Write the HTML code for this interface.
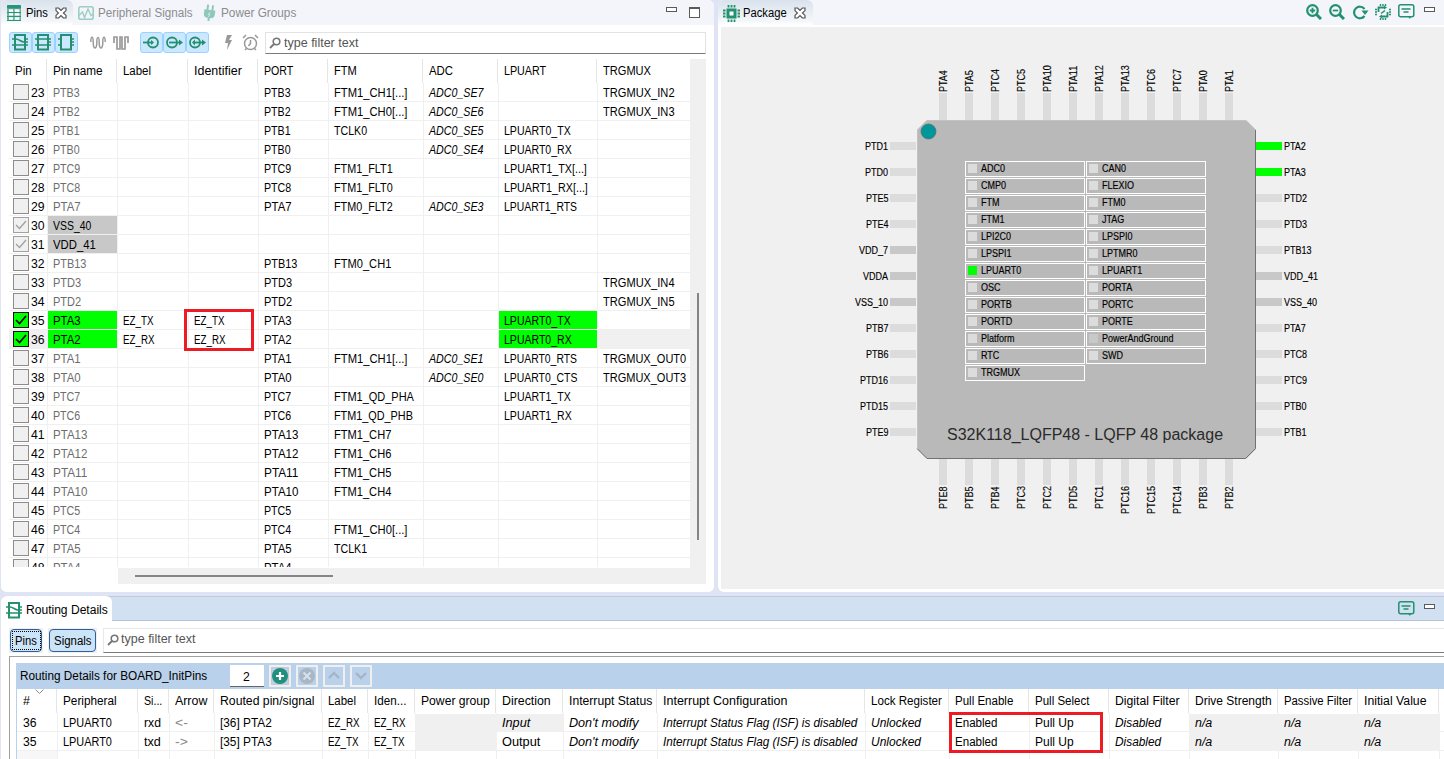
<!DOCTYPE html>
<html><head><meta charset="utf-8"><title>Pins</title>
<style>
html,body{margin:0;padding:0;}
body{width:1444px;height:759px;overflow:hidden;position:relative;background:#dfe4f4;font-family:"Liberation Sans",sans-serif;}
div,svg{position:absolute;box-sizing:border-box;}
.t{white-space:pre;transform-origin:0 0;}
</style></head><body>
<div style="left:1px;top:0px;width:713px;height:592px;background:#fff;border-radius:6px 6px 6px 6px;"></div>
<div style="left:1px;top:0px;width:713px;height:25px;background:#f3f5fb;border-radius:6px 6px 0 0;"></div>
<div style="left:1px;top:0px;width:72px;height:25px;background:linear-gradient(#d9e2ec,#f4f7fa 85%,#fff);border-radius:6px 6px 0 0;"></div>
<svg style="left:7px;top:5px;" width="14" height="16" viewBox="0 0 14 16"><rect x="0" y="0" width="14" height="16" rx="1.5" fill="#6db59f"/><rect x="0" y="0" width="14" height="3.6" rx="1" fill="#26937a"/><g fill="#fff"><rect x="2" y="4.3" width="4" height="2.6"/><rect x="7.8" y="4.3" width="4.6" height="2.6"/><rect x="2" y="8.2" width="4" height="2.4"/><rect x="7.8" y="8.2" width="4.6" height="2.4"/><rect x="2" y="12.2" width="4" height="2.6"/><rect x="7.8" y="12.2" width="4.6" height="2.6"/></g><path d="M0 7.5H14M0 11.5H14M0 15.5H14" stroke="#26937a" stroke-width="1"/></svg>
<div class="t" style="left:26px;top:7px;font-size:12px;line-height:13px;color:#000;transform:scaleX(0.9345);">Pins</div>
<svg style="left:55px;top:7px;" width="12" height="12" viewBox="0 0 12 12"><path d="M1 1 H3.6 L6 3.4 L8.4 1 H11 V3.6 L8.4 6 L11 8.4 V11 H8.4 L6 8.6 L3.6 11 H1 V8.4 L3.4 6 L1 3.6 Z" fill="#fff" stroke="#555" stroke-width="1.2"/></svg>
<svg style="left:78px;top:6px;" width="16" height="14" viewBox="0 0 16 14"><rect x="0.8" y="0.8" width="14.4" height="12.4" rx="2" fill="none" stroke="#9ccfc2" stroke-width="1.6"/><path d="M1 9.5 L4.5 6 L6.5 11.5 L10 3 L13 9.5 L15 8.5" fill="none" stroke="#9ccfc2" stroke-width="1.4"/></svg>
<div class="t" style="left:98px;top:7px;font-size:12px;line-height:13px;color:#8c8c8c;transform:scaleX(0.9715);">Peripheral Signals</div>
<svg style="left:203px;top:4px;" width="13" height="18" viewBox="0 0 13 18"><g transform="rotate(8 6.5 9)"><path d="M3 1 L5 1 L5 6 L8 6 L8 1 L10 1 L10 6 L12 6 L12 10 C12 13 10 14 7.5 14 L7.5 17 L5.5 17 L5.5 14 C3 14 1 13 1 10 L1 6 L3 6 Z" fill="#8fc8bb"/><path d="M7 8 L5.5 10.5 L7 10.5 L6 13" stroke="#d8ece6" stroke-width="0.9" fill="none"/></g></svg>
<div class="t" style="left:221px;top:7px;font-size:12px;line-height:13px;color:#8c8c8c;transform:scaleX(0.9816);">Power Groups</div>
<div style="left:666px;top:7px;width:11px;height:5px;border:1.3px solid #5a5a5a;background:#fff;"></div>
<div style="left:689px;top:7px;width:11px;height:11px;border:1.3px solid #5a5a5a;border-top-width:2.5px;background:#fff;"></div>
<div style="left:9px;top:32px;width:23px;height:21px;background:#cce8ff;border:1px solid #99d1ff;border-radius:3px;"></div>
<div style="left:32px;top:32px;width:23px;height:21px;background:#cce8ff;border:1px solid #99d1ff;border-radius:3px;"></div>
<div style="left:55px;top:32px;width:23px;height:21px;background:#cce8ff;border:1px solid #99d1ff;border-radius:3px;"></div>
<svg style="left:12px;top:34px;" width="17" height="17" viewBox="0 0 17 17"><rect x="3" y="1" width="10" height="14.5" fill="none" stroke="#23906f" stroke-width="2"/><path d="M0 5H3M13 5H16M0 11H3M13 11H16M13 8H16" stroke="#23906f" stroke-width="1.6"/><path d="M4 5 C7 5 9 8 12 8 M3 11H13" fill="none" stroke="#23906f" stroke-width="1.5"/></svg>
<svg style="left:35px;top:34px;" width="17" height="17" viewBox="0 0 17 17"><rect x="3" y="1" width="10" height="14.5" fill="none" stroke="#23906f" stroke-width="2"/><path d="M0 5H3M13 5H16M0 11H3M13 11H16M13 8H16" stroke="#23906f" stroke-width="1.6"/><path d="M3 5H13M3 11H13" stroke="#23906f" stroke-width="1.5"/></svg>
<svg style="left:58px;top:34px;" width="17" height="17" viewBox="0 0 17 17"><rect x="3" y="1" width="10" height="14.5" fill="none" stroke="#23906f" stroke-width="2"/><path d="M0 5H3M13 5H16M0 11H3M13 11H16M13 8H16" stroke="#23906f" stroke-width="1.6"/></svg>
<svg style="left:90px;top:36px;" width="16" height="14" viewBox="0 0 16 14"><path d="M0.8 6 C0.8 -0.5 3.2 -0.5 3.2 6 C3.2 13.8 6.8 13.8 6.8 7 C6.8 -0.2 9.2 -0.2 9.2 7 C9.2 13.8 12.8 13.8 12.8 6 C12.8 -0.5 15.2 -0.5 15.2 6" fill="none" stroke="#999" stroke-width="1.5"/></svg>
<svg style="left:113px;top:36px;" width="16" height="14" viewBox="0 0 16 14"><path d="M1 7V1H4V13H7V1H9V13H12V1H15V7" fill="none" stroke="#999" stroke-width="1.7"/></svg>
<div style="left:140px;top:32px;width:23px;height:21px;background:#cce8ff;border:1px solid #99d1ff;border-radius:3px;"></div>
<div style="left:163px;top:32px;width:23px;height:21px;background:#cce8ff;border:1px solid #99d1ff;border-radius:3px;"></div>
<div style="left:186px;top:32px;width:23px;height:21px;background:#cce8ff;border:1px solid #99d1ff;border-radius:3px;"></div>
<svg style="left:143px;top:35px;" width="17" height="15" viewBox="0 0 17 15"><circle cx="10" cy="7.5" r="5" fill="none" stroke="#23906f" stroke-width="1.8"/><path d="M0 7.5H10" stroke="#23906f" stroke-width="1.8"/><path d="M8 5 L11 7.5 L8 10Z" fill="#23906f"/></svg>
<svg style="left:166px;top:35px;" width="17" height="15" viewBox="0 0 17 15"><circle cx="6" cy="7.5" r="5" fill="none" stroke="#23906f" stroke-width="1.8"/><path d="M3 7.5H14" stroke="#23906f" stroke-width="1.8"/><path d="M13 4.5 L17 7.5 L13 10.5Z" fill="#23906f"/></svg>
<svg style="left:189px;top:35px;" width="17" height="15" viewBox="0 0 17 15"><circle cx="6" cy="7.5" r="5" fill="none" stroke="#23906f" stroke-width="1.8"/><path d="M4 7.5H14" stroke="#23906f" stroke-width="1.8"/><path d="M13 4.5 L17 7.5 L13 10.5Z M6 4.5 L3 7.5 L6 10.5Z" fill="#23906f"/></svg>
<svg style="left:224px;top:35px;" width="9" height="15" viewBox="0 0 9 15"><path d="M3 0 L8 0 L5 5 L8 5 L3 15 L4 8 L1 8 Z" fill="#999"/></svg>
<svg style="left:242px;top:34px;" width="17" height="17" viewBox="0 0 17 17"><circle cx="8.5" cy="9.5" r="6" fill="none" stroke="#999" stroke-width="1.5"/><path d="M8.5 6V9.5L6.5 12M1 4 L4 1 M16 4 L13 1 M3 16 L5 14 M14 16 L12 14" fill="none" stroke="#999" stroke-width="1.5"/></svg>
<div style="left:265px;top:32px;width:441px;height:22px;background:#fff;border:1px solid #e3e3e3;border-bottom:1px solid #7a7a7a;"></div>
<svg style="left:269px;top:37px;" width="12" height="12" viewBox="0 0 12 12"><circle cx="7.5" cy="4.5" r="3.3" fill="none" stroke="#777" stroke-width="1.6"/><path d="M5.5 6.5 L1 11" stroke="#777" stroke-width="1.8"/></svg>
<div class="t" style="left:284px;top:37px;font-size:12px;line-height:13px;color:#555;transform:scaleX(1.0429);">type filter text</div>
<div class="t" style="left:15px;top:65px;font-size:12px;line-height:13px;color:#000;transform:scaleX(0.9578);">Pin</div>
<div class="t" style="left:53px;top:65px;font-size:12px;line-height:13px;color:#000;transform:scaleX(0.9796);">Pin name</div>
<div style="left:46px;top:59px;width:1px;height:24px;background:#e5e5e5;"></div>
<div class="t" style="left:123px;top:65px;font-size:12px;line-height:13px;color:#000;transform:scaleX(0.9541);">Label</div>
<div style="left:116px;top:59px;width:1px;height:24px;background:#e5e5e5;"></div>
<div class="t" style="left:194px;top:65px;font-size:12px;line-height:13px;color:#000;transform:scaleX(1.0395);">Identifier</div>
<div style="left:187px;top:59px;width:1px;height:24px;background:#e5e5e5;"></div>
<div class="t" style="left:264px;top:65px;font-size:12px;line-height:13px;color:#000;transform:scaleX(0.8836);">PORT</div>
<div style="left:257px;top:59px;width:1px;height:24px;background:#e5e5e5;"></div>
<div class="t" style="left:334px;top:65px;font-size:12px;line-height:13px;color:#000;transform:scaleX(0.9263);">FTM</div>
<div style="left:327px;top:59px;width:1px;height:24px;background:#e5e5e5;"></div>
<div class="t" style="left:429px;top:65px;font-size:12px;line-height:13px;color:#000;transform:scaleX(0.9491);">ADC</div>
<div style="left:422px;top:59px;width:1px;height:24px;background:#e5e5e5;"></div>
<div class="t" style="left:504px;top:65px;font-size:12px;line-height:13px;color:#000;transform:scaleX(0.8927);">LPUART</div>
<div style="left:497px;top:59px;width:1px;height:24px;background:#e5e5e5;"></div>
<div class="t" style="left:603px;top:65px;font-size:12px;line-height:13px;color:#000;transform:scaleX(0.9229);">TRGMUX</div>
<div style="left:596px;top:59px;width:1px;height:24px;background:#e5e5e5;"></div>
<div style="left:9px;top:101px;width:681px;height:1px;background:#f0f0f0;"></div>
<div style="left:13px;top:84px;width:16px;height:16px;background:#f0f0f0;border:1px solid #8c8c8c;"></div>
<div class="t" style="left:31px;top:87px;font-size:12px;line-height:13px;color:#000;transform:scaleX(1.0166);">23</div>
<div class="t" style="left:53px;top:87px;font-size:12px;line-height:13px;color:#6d6d6d;transform:scaleX(0.8852);">PTB3</div>
<div class="t" style="left:264px;top:87px;font-size:12px;line-height:13px;color:#000;transform:scaleX(0.8852);">PTB3</div>
<div class="t" style="left:334px;top:87px;font-size:12px;line-height:13px;color:#000;transform:scaleX(0.9339);">FTM1_CH1[...]</div>
<div class="t" style="left:429px;top:87px;font-size:12px;line-height:13px;color:#000;font-style:italic;transform:scaleX(0.8883);">ADC0_SE7</div>
<div class="t" style="left:603px;top:87px;font-size:12px;line-height:13px;color:#000;transform:scaleX(0.9251);">TRGMUX_IN2</div>
<div style="left:9px;top:120px;width:681px;height:1px;background:#f0f0f0;"></div>
<div style="left:13px;top:103px;width:16px;height:16px;background:#f0f0f0;border:1px solid #8c8c8c;"></div>
<div class="t" style="left:31px;top:106px;font-size:12px;line-height:13px;color:#000;transform:scaleX(1.0166);">24</div>
<div class="t" style="left:53px;top:106px;font-size:12px;line-height:13px;color:#6d6d6d;transform:scaleX(0.8852);">PTB2</div>
<div class="t" style="left:264px;top:106px;font-size:12px;line-height:13px;color:#000;transform:scaleX(0.8852);">PTB2</div>
<div class="t" style="left:334px;top:106px;font-size:12px;line-height:13px;color:#000;transform:scaleX(0.9339);">FTM1_CH0[...]</div>
<div class="t" style="left:429px;top:106px;font-size:12px;line-height:13px;color:#000;font-style:italic;transform:scaleX(0.8883);">ADC0_SE6</div>
<div class="t" style="left:603px;top:106px;font-size:12px;line-height:13px;color:#000;transform:scaleX(0.9251);">TRGMUX_IN3</div>
<div style="left:9px;top:139px;width:681px;height:1px;background:#f0f0f0;"></div>
<div style="left:13px;top:122px;width:16px;height:16px;background:#f0f0f0;border:1px solid #8c8c8c;"></div>
<div class="t" style="left:31px;top:125px;font-size:12px;line-height:13px;color:#000;transform:scaleX(1.0166);">25</div>
<div class="t" style="left:53px;top:125px;font-size:12px;line-height:13px;color:#6d6d6d;transform:scaleX(0.8852);">PTB1</div>
<div class="t" style="left:264px;top:125px;font-size:12px;line-height:13px;color:#000;transform:scaleX(0.8852);">PTB1</div>
<div class="t" style="left:334px;top:125px;font-size:12px;line-height:13px;color:#000;transform:scaleX(0.8858);">TCLK0</div>
<div class="t" style="left:429px;top:125px;font-size:12px;line-height:13px;color:#000;font-style:italic;transform:scaleX(0.8883);">ADC0_SE5</div>
<div class="t" style="left:504px;top:125px;font-size:12px;line-height:13px;color:#000;transform:scaleX(0.8797);">LPUART0_TX</div>
<div style="left:9px;top:158px;width:681px;height:1px;background:#f0f0f0;"></div>
<div style="left:13px;top:141px;width:16px;height:16px;background:#f0f0f0;border:1px solid #8c8c8c;"></div>
<div class="t" style="left:31px;top:144px;font-size:12px;line-height:13px;color:#000;transform:scaleX(1.0166);">26</div>
<div class="t" style="left:53px;top:144px;font-size:12px;line-height:13px;color:#6d6d6d;transform:scaleX(0.8852);">PTB0</div>
<div class="t" style="left:264px;top:144px;font-size:12px;line-height:13px;color:#000;transform:scaleX(0.8852);">PTB0</div>
<div class="t" style="left:429px;top:144px;font-size:12px;line-height:13px;color:#000;font-style:italic;transform:scaleX(0.8883);">ADC0_SE4</div>
<div class="t" style="left:504px;top:144px;font-size:12px;line-height:13px;color:#000;transform:scaleX(0.8772);">LPUART0_RX</div>
<div style="left:9px;top:177px;width:681px;height:1px;background:#f0f0f0;"></div>
<div style="left:13px;top:160px;width:16px;height:16px;background:#f0f0f0;border:1px solid #8c8c8c;"></div>
<div class="t" style="left:31px;top:163px;font-size:12px;line-height:13px;color:#000;transform:scaleX(1.0166);">27</div>
<div class="t" style="left:53px;top:163px;font-size:12px;line-height:13px;color:#6d6d6d;transform:scaleX(0.8878);">PTC9</div>
<div class="t" style="left:264px;top:163px;font-size:12px;line-height:13px;color:#000;transform:scaleX(0.8878);">PTC9</div>
<div class="t" style="left:334px;top:163px;font-size:12px;line-height:13px;color:#000;transform:scaleX(0.9005);">FTM1_FLT1</div>
<div class="t" style="left:504px;top:163px;font-size:12px;line-height:13px;color:#000;transform:scaleX(0.8960);">LPUART1_TX[...]</div>
<div style="left:9px;top:196px;width:681px;height:1px;background:#f0f0f0;"></div>
<div style="left:13px;top:179px;width:16px;height:16px;background:#f0f0f0;border:1px solid #8c8c8c;"></div>
<div class="t" style="left:31px;top:182px;font-size:12px;line-height:13px;color:#000;transform:scaleX(1.0166);">28</div>
<div class="t" style="left:53px;top:182px;font-size:12px;line-height:13px;color:#6d6d6d;transform:scaleX(0.8878);">PTC8</div>
<div class="t" style="left:264px;top:182px;font-size:12px;line-height:13px;color:#000;transform:scaleX(0.8878);">PTC8</div>
<div class="t" style="left:334px;top:182px;font-size:12px;line-height:13px;color:#000;transform:scaleX(0.9005);">FTM1_FLT0</div>
<div class="t" style="left:504px;top:182px;font-size:12px;line-height:13px;color:#000;transform:scaleX(0.8937);">LPUART1_RX[...]</div>
<div style="left:9px;top:215px;width:681px;height:1px;background:#f0f0f0;"></div>
<div style="left:13px;top:198px;width:16px;height:16px;background:#f0f0f0;border:1px solid #8c8c8c;"></div>
<div class="t" style="left:31px;top:201px;font-size:12px;line-height:13px;color:#000;transform:scaleX(1.0166);">29</div>
<div class="t" style="left:53px;top:201px;font-size:12px;line-height:13px;color:#6d6d6d;transform:scaleX(0.9480);">PTA7</div>
<div class="t" style="left:264px;top:201px;font-size:12px;line-height:13px;color:#000;transform:scaleX(0.9480);">PTA7</div>
<div class="t" style="left:334px;top:201px;font-size:12px;line-height:13px;color:#000;transform:scaleX(0.9005);">FTM0_FLT2</div>
<div class="t" style="left:429px;top:201px;font-size:12px;line-height:13px;color:#000;font-style:italic;transform:scaleX(0.8883);">ADC0_SE3</div>
<div class="t" style="left:504px;top:201px;font-size:12px;line-height:13px;color:#000;transform:scaleX(0.8666);">LPUART1_RTS</div>
<div style="left:48px;top:216px;width:69px;height:18px;background:#c8c8c8;"></div>
<div style="left:9px;top:234px;width:681px;height:1px;background:#f0f0f0;"></div>
<div style="left:13px;top:217px;width:16px;height:16px;background:#f0f0f0;border:1px solid #a0a0a0;"></div>
<svg style="left:13px;top:217px;" width="16" height="16" viewBox="0 0 16 16"><path d="M3 8 L6.5 11.5 L13 4" fill="none" stroke="#a0a0a0" stroke-width="1.3"/></svg>
<div class="t" style="left:31px;top:220px;font-size:12px;line-height:13px;color:#000;transform:scaleX(1.0166);">30</div>
<div class="t" style="left:53px;top:220px;font-size:12px;line-height:13px;color:#000;transform:scaleX(0.8705);">VSS_40</div>
<div style="left:48px;top:235px;width:69px;height:18px;background:#c8c8c8;"></div>
<div style="left:9px;top:253px;width:681px;height:1px;background:#f0f0f0;"></div>
<div style="left:13px;top:236px;width:16px;height:16px;background:#f0f0f0;border:1px solid #a0a0a0;"></div>
<svg style="left:13px;top:236px;" width="16" height="16" viewBox="0 0 16 16"><path d="M3 8 L6.5 11.5 L13 4" fill="none" stroke="#a0a0a0" stroke-width="1.3"/></svg>
<div class="t" style="left:31px;top:239px;font-size:12px;line-height:13px;color:#000;transform:scaleX(1.0166);">31</div>
<div class="t" style="left:53px;top:239px;font-size:12px;line-height:13px;color:#000;transform:scaleX(0.9443);">VDD_41</div>
<div style="left:9px;top:272px;width:681px;height:1px;background:#f0f0f0;"></div>
<div style="left:13px;top:255px;width:16px;height:16px;background:#f0f0f0;border:1px solid #8c8c8c;"></div>
<div class="t" style="left:31px;top:258px;font-size:12px;line-height:13px;color:#000;transform:scaleX(1.0166);">32</div>
<div class="t" style="left:53px;top:258px;font-size:12px;line-height:13px;color:#6d6d6d;transform:scaleX(0.9091);">PTB13</div>
<div class="t" style="left:264px;top:258px;font-size:12px;line-height:13px;color:#000;transform:scaleX(0.9091);">PTB13</div>
<div class="t" style="left:334px;top:258px;font-size:12px;line-height:13px;color:#000;transform:scaleX(0.9241);">FTM0_CH1</div>
<div style="left:9px;top:291px;width:681px;height:1px;background:#f0f0f0;"></div>
<div style="left:13px;top:274px;width:16px;height:16px;background:#f0f0f0;border:1px solid #8c8c8c;"></div>
<div class="t" style="left:31px;top:277px;font-size:12px;line-height:13px;color:#000;transform:scaleX(1.0166);">33</div>
<div class="t" style="left:53px;top:277px;font-size:12px;line-height:13px;color:#6d6d6d;transform:scaleX(0.9192);">PTD3</div>
<div class="t" style="left:264px;top:277px;font-size:12px;line-height:13px;color:#000;transform:scaleX(0.9192);">PTD3</div>
<div class="t" style="left:603px;top:277px;font-size:12px;line-height:13px;color:#000;transform:scaleX(0.9251);">TRGMUX_IN4</div>
<div style="left:9px;top:310px;width:681px;height:1px;background:#f0f0f0;"></div>
<div style="left:13px;top:293px;width:16px;height:16px;background:#f0f0f0;border:1px solid #8c8c8c;"></div>
<div class="t" style="left:31px;top:296px;font-size:12px;line-height:13px;color:#000;transform:scaleX(1.0166);">34</div>
<div class="t" style="left:53px;top:296px;font-size:12px;line-height:13px;color:#6d6d6d;transform:scaleX(0.9192);">PTD2</div>
<div class="t" style="left:264px;top:296px;font-size:12px;line-height:13px;color:#000;transform:scaleX(0.9192);">PTD2</div>
<div class="t" style="left:603px;top:296px;font-size:12px;line-height:13px;color:#000;transform:scaleX(0.9251);">TRGMUX_IN5</div>
<div style="left:48px;top:311px;width:69px;height:18px;background:#00ff00;"></div>
<div style="left:499px;top:311px;width:98px;height:18px;background:#00ff00;"></div>
<div style="left:9px;top:329px;width:681px;height:1px;background:#f0f0f0;"></div>
<div style="left:13px;top:312px;width:16px;height:16px;background:#00ff00;border:1px solid #111;"></div>
<svg style="left:13px;top:312px;" width="16" height="16" viewBox="0 0 16 16"><path d="M3 8 L6.5 11.5 L13 4" fill="none" stroke="#000" stroke-width="1.6"/></svg>
<div class="t" style="left:31px;top:315px;font-size:12px;line-height:13px;color:#000;transform:scaleX(1.0166);">35</div>
<div class="t" style="left:53px;top:315px;font-size:12px;line-height:13px;color:#000;transform:scaleX(0.9480);">PTA3</div>
<div class="t" style="left:123px;top:315px;font-size:12px;line-height:13px;color:#000;transform:scaleX(0.8165);">EZ_TX</div>
<div class="t" style="left:194px;top:315px;font-size:12px;line-height:13px;color:#000;transform:scaleX(0.8165);">EZ_TX</div>
<div class="t" style="left:264px;top:315px;font-size:12px;line-height:13px;color:#000;transform:scaleX(0.9480);">PTA3</div>
<div class="t" style="left:504px;top:315px;font-size:12px;line-height:13px;color:#000;transform:scaleX(0.8797);">LPUART0_TX</div>
<div style="left:9px;top:330px;width:38px;height:18px;background:#f0f0f0;"></div>
<div style="left:598px;top:330px;width:92px;height:18px;background:#f0f0f0;"></div>
<div style="left:48px;top:330px;width:69px;height:18px;background:#00ff00;"></div>
<div style="left:499px;top:330px;width:98px;height:18px;background:#00ff00;"></div>
<div style="left:9px;top:348px;width:681px;height:1px;background:#f0f0f0;"></div>
<div style="left:13px;top:331px;width:16px;height:16px;background:#00ff00;border:1px solid #111;"></div>
<svg style="left:13px;top:331px;" width="16" height="16" viewBox="0 0 16 16"><path d="M3 8 L6.5 11.5 L13 4" fill="none" stroke="#000" stroke-width="1.6"/></svg>
<div class="t" style="left:31px;top:334px;font-size:12px;line-height:13px;color:#000;transform:scaleX(1.0166);">36</div>
<div class="t" style="left:53px;top:334px;font-size:12px;line-height:13px;color:#000;transform:scaleX(0.9480);">PTA2</div>
<div class="t" style="left:123px;top:334px;font-size:12px;line-height:13px;color:#000;transform:scaleX(0.8138);">EZ_RX</div>
<div class="t" style="left:194px;top:334px;font-size:12px;line-height:13px;color:#000;transform:scaleX(0.8138);">EZ_RX</div>
<div class="t" style="left:264px;top:334px;font-size:12px;line-height:13px;color:#000;transform:scaleX(0.9480);">PTA2</div>
<div class="t" style="left:504px;top:334px;font-size:12px;line-height:13px;color:#000;transform:scaleX(0.8772);">LPUART0_RX</div>
<div style="left:9px;top:367px;width:681px;height:1px;background:#f0f0f0;"></div>
<div style="left:13px;top:350px;width:16px;height:16px;background:#f0f0f0;border:1px solid #8c8c8c;"></div>
<div class="t" style="left:31px;top:353px;font-size:12px;line-height:13px;color:#000;transform:scaleX(1.0166);">37</div>
<div class="t" style="left:53px;top:353px;font-size:12px;line-height:13px;color:#6d6d6d;transform:scaleX(0.9480);">PTA1</div>
<div class="t" style="left:264px;top:353px;font-size:12px;line-height:13px;color:#000;transform:scaleX(0.9480);">PTA1</div>
<div class="t" style="left:334px;top:353px;font-size:12px;line-height:13px;color:#000;transform:scaleX(0.9339);">FTM1_CH1[...]</div>
<div class="t" style="left:429px;top:353px;font-size:12px;line-height:13px;color:#000;font-style:italic;transform:scaleX(0.8883);">ADC0_SE1</div>
<div class="t" style="left:504px;top:353px;font-size:12px;line-height:13px;color:#000;transform:scaleX(0.8666);">LPUART0_RTS</div>
<div class="t" style="left:603px;top:353px;font-size:12px;line-height:13px;color:#000;transform:scaleX(0.9173);">TRGMUX_OUT0</div>
<div style="left:9px;top:386px;width:681px;height:1px;background:#f0f0f0;"></div>
<div style="left:13px;top:369px;width:16px;height:16px;background:#f0f0f0;border:1px solid #8c8c8c;"></div>
<div class="t" style="left:31px;top:372px;font-size:12px;line-height:13px;color:#000;transform:scaleX(1.0166);">38</div>
<div class="t" style="left:53px;top:372px;font-size:12px;line-height:13px;color:#6d6d6d;transform:scaleX(0.9480);">PTA0</div>
<div class="t" style="left:264px;top:372px;font-size:12px;line-height:13px;color:#000;transform:scaleX(0.9480);">PTA0</div>
<div class="t" style="left:429px;top:372px;font-size:12px;line-height:13px;color:#000;font-style:italic;transform:scaleX(0.8883);">ADC0_SE0</div>
<div class="t" style="left:504px;top:372px;font-size:12px;line-height:13px;color:#000;transform:scaleX(0.8694);">LPUART0_CTS</div>
<div class="t" style="left:603px;top:372px;font-size:12px;line-height:13px;color:#000;transform:scaleX(0.9173);">TRGMUX_OUT3</div>
<div style="left:9px;top:405px;width:681px;height:1px;background:#f0f0f0;"></div>
<div style="left:13px;top:388px;width:16px;height:16px;background:#f0f0f0;border:1px solid #8c8c8c;"></div>
<div class="t" style="left:31px;top:391px;font-size:12px;line-height:13px;color:#000;transform:scaleX(1.0166);">39</div>
<div class="t" style="left:53px;top:391px;font-size:12px;line-height:13px;color:#6d6d6d;transform:scaleX(0.8878);">PTC7</div>
<div class="t" style="left:264px;top:391px;font-size:12px;line-height:13px;color:#000;transform:scaleX(0.8878);">PTC7</div>
<div class="t" style="left:334px;top:391px;font-size:12px;line-height:13px;color:#000;transform:scaleX(0.9152);">FTM1_QD_PHA</div>
<div class="t" style="left:504px;top:391px;font-size:12px;line-height:13px;color:#000;transform:scaleX(0.8797);">LPUART1_TX</div>
<div style="left:9px;top:424px;width:681px;height:1px;background:#f0f0f0;"></div>
<div style="left:13px;top:407px;width:16px;height:16px;background:#f0f0f0;border:1px solid #8c8c8c;"></div>
<div class="t" style="left:31px;top:410px;font-size:12px;line-height:13px;color:#000;transform:scaleX(1.0166);">40</div>
<div class="t" style="left:53px;top:410px;font-size:12px;line-height:13px;color:#6d6d6d;transform:scaleX(0.8878);">PTC6</div>
<div class="t" style="left:264px;top:410px;font-size:12px;line-height:13px;color:#000;transform:scaleX(0.8878);">PTC6</div>
<div class="t" style="left:334px;top:410px;font-size:12px;line-height:13px;color:#000;transform:scaleX(0.9032);">FTM1_QD_PHB</div>
<div class="t" style="left:504px;top:410px;font-size:12px;line-height:13px;color:#000;transform:scaleX(0.8772);">LPUART1_RX</div>
<div style="left:9px;top:443px;width:681px;height:1px;background:#f0f0f0;"></div>
<div style="left:13px;top:426px;width:16px;height:16px;background:#f0f0f0;border:1px solid #8c8c8c;"></div>
<div class="t" style="left:31px;top:429px;font-size:12px;line-height:13px;color:#000;transform:scaleX(1.0166);">41</div>
<div class="t" style="left:53px;top:429px;font-size:12px;line-height:13px;color:#6d6d6d;transform:scaleX(0.9608);">PTA13</div>
<div class="t" style="left:264px;top:429px;font-size:12px;line-height:13px;color:#000;transform:scaleX(0.9608);">PTA13</div>
<div class="t" style="left:334px;top:429px;font-size:12px;line-height:13px;color:#000;transform:scaleX(0.9241);">FTM1_CH7</div>
<div style="left:9px;top:462px;width:681px;height:1px;background:#f0f0f0;"></div>
<div style="left:13px;top:445px;width:16px;height:16px;background:#f0f0f0;border:1px solid #8c8c8c;"></div>
<div class="t" style="left:31px;top:448px;font-size:12px;line-height:13px;color:#000;transform:scaleX(1.0166);">42</div>
<div class="t" style="left:53px;top:448px;font-size:12px;line-height:13px;color:#6d6d6d;transform:scaleX(0.9608);">PTA12</div>
<div class="t" style="left:264px;top:448px;font-size:12px;line-height:13px;color:#000;transform:scaleX(0.9608);">PTA12</div>
<div class="t" style="left:334px;top:448px;font-size:12px;line-height:13px;color:#000;transform:scaleX(0.9241);">FTM1_CH6</div>
<div style="left:9px;top:481px;width:681px;height:1px;background:#f0f0f0;"></div>
<div style="left:13px;top:464px;width:16px;height:16px;background:#f0f0f0;border:1px solid #8c8c8c;"></div>
<div class="t" style="left:31px;top:467px;font-size:12px;line-height:13px;color:#000;transform:scaleX(1.0166);">43</div>
<div class="t" style="left:53px;top:467px;font-size:12px;line-height:13px;color:#6d6d6d;transform:scaleX(0.9853);">PTA11</div>
<div class="t" style="left:264px;top:467px;font-size:12px;line-height:13px;color:#000;transform:scaleX(0.9853);">PTA11</div>
<div class="t" style="left:334px;top:467px;font-size:12px;line-height:13px;color:#000;transform:scaleX(0.9241);">FTM1_CH5</div>
<div style="left:9px;top:500px;width:681px;height:1px;background:#f0f0f0;"></div>
<div style="left:13px;top:483px;width:16px;height:16px;background:#f0f0f0;border:1px solid #8c8c8c;"></div>
<div class="t" style="left:31px;top:486px;font-size:12px;line-height:13px;color:#000;transform:scaleX(1.0166);">44</div>
<div class="t" style="left:53px;top:486px;font-size:12px;line-height:13px;color:#6d6d6d;transform:scaleX(0.9608);">PTA10</div>
<div class="t" style="left:264px;top:486px;font-size:12px;line-height:13px;color:#000;transform:scaleX(0.9608);">PTA10</div>
<div class="t" style="left:334px;top:486px;font-size:12px;line-height:13px;color:#000;transform:scaleX(0.9241);">FTM1_CH4</div>
<div style="left:9px;top:519px;width:681px;height:1px;background:#f0f0f0;"></div>
<div style="left:13px;top:502px;width:16px;height:16px;background:#f0f0f0;border:1px solid #8c8c8c;"></div>
<div class="t" style="left:31px;top:505px;font-size:12px;line-height:13px;color:#000;transform:scaleX(1.0166);">45</div>
<div class="t" style="left:53px;top:505px;font-size:12px;line-height:13px;color:#6d6d6d;transform:scaleX(0.8878);">PTC5</div>
<div class="t" style="left:264px;top:505px;font-size:12px;line-height:13px;color:#000;transform:scaleX(0.8878);">PTC5</div>
<div style="left:9px;top:538px;width:681px;height:1px;background:#f0f0f0;"></div>
<div style="left:13px;top:521px;width:16px;height:16px;background:#f0f0f0;border:1px solid #8c8c8c;"></div>
<div class="t" style="left:31px;top:524px;font-size:12px;line-height:13px;color:#000;transform:scaleX(1.0166);">46</div>
<div class="t" style="left:53px;top:524px;font-size:12px;line-height:13px;color:#6d6d6d;transform:scaleX(0.8878);">PTC4</div>
<div class="t" style="left:264px;top:524px;font-size:12px;line-height:13px;color:#000;transform:scaleX(0.8878);">PTC4</div>
<div class="t" style="left:334px;top:524px;font-size:12px;line-height:13px;color:#000;transform:scaleX(0.9339);">FTM1_CH0[...]</div>
<div style="left:9px;top:557px;width:681px;height:1px;background:#f0f0f0;"></div>
<div style="left:13px;top:540px;width:16px;height:16px;background:#f0f0f0;border:1px solid #8c8c8c;"></div>
<div class="t" style="left:31px;top:543px;font-size:12px;line-height:13px;color:#000;transform:scaleX(1.0166);">47</div>
<div class="t" style="left:53px;top:543px;font-size:12px;line-height:13px;color:#6d6d6d;transform:scaleX(0.9480);">PTA5</div>
<div class="t" style="left:264px;top:543px;font-size:12px;line-height:13px;color:#000;transform:scaleX(0.9480);">PTA5</div>
<div class="t" style="left:334px;top:543px;font-size:12px;line-height:13px;color:#000;transform:scaleX(0.8858);">TCLK1</div>
<div style="left:9px;top:576px;width:681px;height:1px;background:#f0f0f0;"></div>
<div style="left:13px;top:559px;width:16px;height:16px;background:#f0f0f0;border:1px solid #8c8c8c;"></div>
<div class="t" style="left:31px;top:562px;font-size:12px;line-height:13px;color:#000;transform:scaleX(1.0166);">48</div>
<div class="t" style="left:53px;top:562px;font-size:12px;line-height:13px;color:#6d6d6d;transform:scaleX(0.9480);">PTA4</div>
<div class="t" style="left:264px;top:562px;font-size:12px;line-height:13px;color:#000;transform:scaleX(0.9480);">PTA4</div>
<div style="left:47px;top:83px;width:1px;height:484px;background:#f0f0f0;"></div>
<div style="left:117px;top:83px;width:1px;height:484px;background:#f0f0f0;"></div>
<div style="left:188px;top:83px;width:1px;height:484px;background:#f0f0f0;"></div>
<div style="left:258px;top:83px;width:1px;height:484px;background:#f0f0f0;"></div>
<div style="left:328px;top:83px;width:1px;height:484px;background:#f0f0f0;"></div>
<div style="left:423px;top:83px;width:1px;height:484px;background:#f0f0f0;"></div>
<div style="left:498px;top:83px;width:1px;height:484px;background:#f0f0f0;"></div>
<div style="left:597px;top:83px;width:1px;height:484px;background:#f0f0f0;"></div>
<div style="left:1px;top:567px;width:713px;height:25px;background:#fff;border-radius:0 0 6px 6px;"></div>
<div style="left:690px;top:59px;width:16px;height:525px;background:#f0f0f0;"></div>
<div style="left:697px;top:293px;width:2px;height:247px;background:#858585;"></div>
<div style="left:118px;top:568px;width:588px;height:16px;background:#f0f0f0;"></div>
<div style="left:135px;top:575px;width:198px;height:2px;background:#858585;"></div>
<div style="left:184px;top:309px;width:70px;height:42px;border:3px solid #ed1c24;"></div>
<div style="left:718px;top:0px;width:726px;height:592px;background:#fff;border-radius:6px 0 0 6px;"></div>
<div style="left:718px;top:0px;width:726px;height:25px;background:#f3f5fb;border-radius:6px 0 0 0;"></div>
<div style="left:718px;top:0px;width:95px;height:25px;background:linear-gradient(#d9e2ec,#f4f7fa 85%,#fff);border-radius:6px 6px 0 0;"></div>
<svg style="left:723px;top:5px;" width="17" height="17" viewBox="0 0 17 17"><rect x="3.5" y="3.5" width="10" height="10" fill="#23906f"/><rect x="6.5" y="6.5" width="4" height="4" fill="#fff"/><path d="M5.5 0V2.5M8.5 0V2.5M11.5 0V2.5M5.5 14.5V17M8.5 14.5V17M11.5 14.5V17M0 5.5H2.5M0 8.5H2.5M0 11.5H2.5M14.5 5.5H17M14.5 8.5H17M14.5 11.5H17" stroke="#23906f" stroke-width="1.8"/></svg>
<div class="t" style="left:743px;top:7px;font-size:12px;line-height:13px;color:#000;transform:scaleX(0.9342);">Package</div>
<svg style="left:794px;top:7px;" width="12" height="12" viewBox="0 0 12 12"><path d="M1 1 H3.6 L6 3.4 L8.4 1 H11 V3.6 L8.4 6 L11 8.4 V11 H8.4 L6 8.6 L3.6 11 H1 V8.4 L3.4 6 L1 3.6 Z" fill="#fff" stroke="#555" stroke-width="1.2"/></svg>
<svg style="left:1306px;top:4px;" width="16" height="16" viewBox="0 0 16 16"><circle cx="6.5" cy="6.5" r="5.3" fill="none" stroke="#23906f" stroke-width="2.2"/><path d="M10.5 10.5 L15 15" stroke="#23906f" stroke-width="3"/><path d="M6.5 3.8V9.2M3.8 6.5H9.2" stroke="#23906f" stroke-width="1.8"/></svg>
<svg style="left:1329px;top:4px;" width="16" height="16" viewBox="0 0 16 16"><circle cx="6.5" cy="6.5" r="5.3" fill="none" stroke="#23906f" stroke-width="2.2"/><path d="M10.5 10.5 L15 15" stroke="#23906f" stroke-width="3"/><path d="M3.8 6.5H9.2" stroke="#23906f" stroke-width="1.8"/></svg>
<svg style="left:1352px;top:4px;" width="17" height="16" viewBox="0 0 17 16"><path d="M12.5 5 A5.8 5.8 0 1 0 12.5 12" fill="none" stroke="#23906f" stroke-width="2.2"/><path d="M9.5 6.5 L16.5 6.5 L13 11 Z" fill="#23906f"/></svg>
<svg style="left:1375px;top:4px;" width="16" height="16" viewBox="0 0 16 16"><path d="M5.5 0V2M8 0V2M10.5 0V2M5.5 14V16M8 14V16M10.5 14V16M0 5.5H2M0 8H2M0 10.5H2M14 5.5H16M14 8H16M14 10.5H16" stroke="#23906f" stroke-width="1.4"/><path d="M3.5 8 V3.5 H9 M12.5 8 V12.5 H7" fill="none" stroke="#23906f" stroke-width="1.8"/><path d="M9 1.5 L12 3.5 L9 5.5Z M7 10.5 L4 12.5 L7 14.5Z" fill="#23906f"/><path d="M6 9.5 L10 6.5" stroke="#23906f" stroke-width="1.5"/></svg>
<svg style="left:1398px;top:4px;" width="17" height="16" viewBox="0 0 17 16"><rect x="0.8" y="0.8" width="15" height="12" rx="2" fill="none" stroke="#23906f" stroke-width="1.5"/><path d="M3.5 5H12.5M5.5 8H10.5" stroke="#23906f" stroke-width="1.6"/><path d="M10 12.5 L12 15 L13 12.5Z" fill="#23906f"/></svg>
<div style="left:1424px;top:7px;width:11px;height:5px;border:1.3px solid #5a5a5a;background:#fff;"></div>
<div style="left:721px;top:27px;width:723px;height:562px;background:#f0f0f0;"></div>
<div style="left:939px;top:93px;width:8px;height:27px;background:#dcdcdc;"></div>
<div class="t" style="left:940px;top:92px;font-size:10px;line-height:8px;color:#000;-webkit-text-stroke:0.15px #000;transform-origin:0 0;transform:rotate(-90deg) scaleX(0.9);">PTA4</div>
<div style="left:965px;top:93px;width:8px;height:27px;background:#dcdcdc;"></div>
<div class="t" style="left:966px;top:92px;font-size:10px;line-height:8px;color:#000;-webkit-text-stroke:0.15px #000;transform-origin:0 0;transform:rotate(-90deg) scaleX(0.9);">PTA5</div>
<div style="left:991px;top:93px;width:8px;height:27px;background:#dcdcdc;"></div>
<div class="t" style="left:992px;top:92px;font-size:10px;line-height:8px;color:#000;-webkit-text-stroke:0.15px #000;transform-origin:0 0;transform:rotate(-90deg) scaleX(0.9);">PTC4</div>
<div style="left:1017px;top:93px;width:8px;height:27px;background:#dcdcdc;"></div>
<div class="t" style="left:1018px;top:92px;font-size:10px;line-height:8px;color:#000;-webkit-text-stroke:0.15px #000;transform-origin:0 0;transform:rotate(-90deg) scaleX(0.9);">PTC5</div>
<div style="left:1043px;top:93px;width:8px;height:27px;background:#dcdcdc;"></div>
<div class="t" style="left:1044px;top:92px;font-size:10px;line-height:8px;color:#000;-webkit-text-stroke:0.15px #000;transform-origin:0 0;transform:rotate(-90deg) scaleX(0.9);">PTA10</div>
<div style="left:1069px;top:93px;width:8px;height:27px;background:#dcdcdc;"></div>
<div class="t" style="left:1070px;top:92px;font-size:10px;line-height:8px;color:#000;-webkit-text-stroke:0.15px #000;transform-origin:0 0;transform:rotate(-90deg) scaleX(0.9);">PTA11</div>
<div style="left:1095px;top:93px;width:8px;height:27px;background:#dcdcdc;"></div>
<div class="t" style="left:1096px;top:92px;font-size:10px;line-height:8px;color:#000;-webkit-text-stroke:0.15px #000;transform-origin:0 0;transform:rotate(-90deg) scaleX(0.9);">PTA12</div>
<div style="left:1121px;top:93px;width:8px;height:27px;background:#dcdcdc;"></div>
<div class="t" style="left:1122px;top:92px;font-size:10px;line-height:8px;color:#000;-webkit-text-stroke:0.15px #000;transform-origin:0 0;transform:rotate(-90deg) scaleX(0.9);">PTA13</div>
<div style="left:1147px;top:93px;width:8px;height:27px;background:#dcdcdc;"></div>
<div class="t" style="left:1148px;top:92px;font-size:10px;line-height:8px;color:#000;-webkit-text-stroke:0.15px #000;transform-origin:0 0;transform:rotate(-90deg) scaleX(0.9);">PTC6</div>
<div style="left:1173px;top:93px;width:8px;height:27px;background:#dcdcdc;"></div>
<div class="t" style="left:1174px;top:92px;font-size:10px;line-height:8px;color:#000;-webkit-text-stroke:0.15px #000;transform-origin:0 0;transform:rotate(-90deg) scaleX(0.9);">PTC7</div>
<div style="left:1199px;top:93px;width:8px;height:27px;background:#dcdcdc;"></div>
<div class="t" style="left:1200px;top:92px;font-size:10px;line-height:8px;color:#000;-webkit-text-stroke:0.15px #000;transform-origin:0 0;transform:rotate(-90deg) scaleX(0.9);">PTA0</div>
<div style="left:1225px;top:93px;width:8px;height:27px;background:#dcdcdc;"></div>
<div class="t" style="left:1226px;top:92px;font-size:10px;line-height:8px;color:#000;-webkit-text-stroke:0.15px #000;transform-origin:0 0;transform:rotate(-90deg) scaleX(0.9);">PTA1</div>
<div style="left:939px;top:459px;width:8px;height:26px;background:#dcdcdc;"></div>
<div class="t" style="left:940px;top:509px;font-size:10px;line-height:8px;color:#000;-webkit-text-stroke:0.15px #000;transform-origin:0 0;transform:rotate(-90deg) scaleX(0.9);">PTE8</div>
<div style="left:965px;top:459px;width:8px;height:26px;background:#dcdcdc;"></div>
<div class="t" style="left:966px;top:509px;font-size:10px;line-height:8px;color:#000;-webkit-text-stroke:0.15px #000;transform-origin:0 0;transform:rotate(-90deg) scaleX(0.9);">PTB5</div>
<div style="left:991px;top:459px;width:8px;height:26px;background:#dcdcdc;"></div>
<div class="t" style="left:992px;top:509px;font-size:10px;line-height:8px;color:#000;-webkit-text-stroke:0.15px #000;transform-origin:0 0;transform:rotate(-90deg) scaleX(0.9);">PTB4</div>
<div style="left:1017px;top:459px;width:8px;height:26px;background:#dcdcdc;"></div>
<div class="t" style="left:1018px;top:509px;font-size:10px;line-height:8px;color:#000;-webkit-text-stroke:0.15px #000;transform-origin:0 0;transform:rotate(-90deg) scaleX(0.9);">PTC3</div>
<div style="left:1043px;top:459px;width:8px;height:26px;background:#dcdcdc;"></div>
<div class="t" style="left:1044px;top:509px;font-size:10px;line-height:8px;color:#000;-webkit-text-stroke:0.15px #000;transform-origin:0 0;transform:rotate(-90deg) scaleX(0.9);">PTC2</div>
<div style="left:1069px;top:459px;width:8px;height:26px;background:#dcdcdc;"></div>
<div class="t" style="left:1070px;top:509px;font-size:10px;line-height:8px;color:#000;-webkit-text-stroke:0.15px #000;transform-origin:0 0;transform:rotate(-90deg) scaleX(0.9);">PTD5</div>
<div style="left:1095px;top:459px;width:8px;height:26px;background:#dcdcdc;"></div>
<div class="t" style="left:1096px;top:509px;font-size:10px;line-height:8px;color:#000;-webkit-text-stroke:0.15px #000;transform-origin:0 0;transform:rotate(-90deg) scaleX(0.9);">PTC1</div>
<div style="left:1121px;top:459px;width:8px;height:26px;background:#dcdcdc;"></div>
<div class="t" style="left:1122px;top:514px;font-size:10px;line-height:8px;color:#000;-webkit-text-stroke:0.15px #000;transform-origin:0 0;transform:rotate(-90deg) scaleX(0.9);">PTC16</div>
<div style="left:1147px;top:459px;width:8px;height:26px;background:#dcdcdc;"></div>
<div class="t" style="left:1148px;top:514px;font-size:10px;line-height:8px;color:#000;-webkit-text-stroke:0.15px #000;transform-origin:0 0;transform:rotate(-90deg) scaleX(0.9);">PTC15</div>
<div style="left:1173px;top:459px;width:8px;height:26px;background:#dcdcdc;"></div>
<div class="t" style="left:1174px;top:514px;font-size:10px;line-height:8px;color:#000;-webkit-text-stroke:0.15px #000;transform-origin:0 0;transform:rotate(-90deg) scaleX(0.9);">PTC14</div>
<div style="left:1199px;top:459px;width:8px;height:26px;background:#dcdcdc;"></div>
<div class="t" style="left:1200px;top:509px;font-size:10px;line-height:8px;color:#000;-webkit-text-stroke:0.15px #000;transform-origin:0 0;transform:rotate(-90deg) scaleX(0.9);">PTB3</div>
<div style="left:1225px;top:459px;width:8px;height:26px;background:#dcdcdc;"></div>
<div class="t" style="left:1226px;top:509px;font-size:10px;line-height:8px;color:#000;-webkit-text-stroke:0.15px #000;transform-origin:0 0;transform:rotate(-90deg) scaleX(0.9);">PTB2</div>
<div style="left:890px;top:142px;width:26px;height:8px;background:#dcdcdc;"></div>
<div class="t" style="left:865.0px;top:142px;font-size:10px;line-height:10px;color:#000;-webkit-text-stroke:0.15px #000;transform:scaleX(0.9);">PTD1</div>
<div style="left:890px;top:168px;width:26px;height:8px;background:#dcdcdc;"></div>
<div class="t" style="left:865.0px;top:168px;font-size:10px;line-height:10px;color:#000;-webkit-text-stroke:0.15px #000;transform:scaleX(0.9);">PTD0</div>
<div style="left:890px;top:194px;width:26px;height:8px;background:#dcdcdc;"></div>
<div class="t" style="left:865.5px;top:194px;font-size:10px;line-height:10px;color:#000;-webkit-text-stroke:0.15px #000;transform:scaleX(0.9);">PTE5</div>
<div style="left:890px;top:220px;width:26px;height:8px;background:#dcdcdc;"></div>
<div class="t" style="left:865.5px;top:220px;font-size:10px;line-height:10px;color:#000;-webkit-text-stroke:0.15px #000;transform:scaleX(0.9);">PTE4</div>
<div style="left:890px;top:246px;width:26px;height:8px;background:#c8c8c8;"></div>
<div class="t" style="left:859.0px;top:246px;font-size:10px;line-height:10px;color:#000;-webkit-text-stroke:0.15px #000;transform:scaleX(0.9);">VDD_7</div>
<div style="left:890px;top:272px;width:26px;height:8px;background:#c8c8c8;"></div>
<div class="t" style="left:863.0px;top:272px;font-size:10px;line-height:10px;color:#000;-webkit-text-stroke:0.15px #000;transform:scaleX(0.9);">VDDA</div>
<div style="left:890px;top:298px;width:26px;height:8px;background:#c8c8c8;"></div>
<div class="t" style="left:855.0px;top:298px;font-size:10px;line-height:10px;color:#000;-webkit-text-stroke:0.15px #000;transform:scaleX(0.9);">VSS_10</div>
<div style="left:890px;top:324px;width:26px;height:8px;background:#dcdcdc;"></div>
<div class="t" style="left:865.5px;top:324px;font-size:10px;line-height:10px;color:#000;-webkit-text-stroke:0.15px #000;transform:scaleX(0.9);">PTB7</div>
<div style="left:890px;top:350px;width:26px;height:8px;background:#dcdcdc;"></div>
<div class="t" style="left:865.5px;top:350px;font-size:10px;line-height:10px;color:#000;-webkit-text-stroke:0.15px #000;transform:scaleX(0.9);">PTB6</div>
<div style="left:890px;top:376px;width:26px;height:8px;background:#dcdcdc;"></div>
<div class="t" style="left:860.0px;top:376px;font-size:10px;line-height:10px;color:#000;-webkit-text-stroke:0.15px #000;transform:scaleX(0.9);">PTD16</div>
<div style="left:890px;top:402px;width:26px;height:8px;background:#dcdcdc;"></div>
<div class="t" style="left:860.0px;top:402px;font-size:10px;line-height:10px;color:#000;-webkit-text-stroke:0.15px #000;transform:scaleX(0.9);">PTD15</div>
<div style="left:890px;top:428px;width:26px;height:8px;background:#dcdcdc;"></div>
<div class="t" style="left:865.5px;top:428px;font-size:10px;line-height:10px;color:#000;-webkit-text-stroke:0.15px #000;transform:scaleX(0.9);">PTE9</div>
<div style="left:1256px;top:142px;width:26px;height:8px;background:#00ff00;"></div>
<div class="t" style="left:1284px;top:142px;font-size:10px;line-height:10px;color:#000;-webkit-text-stroke:0.15px #000;transform:scaleX(0.9);">PTA2</div>
<div style="left:1256px;top:168px;width:26px;height:8px;background:#00ff00;"></div>
<div class="t" style="left:1284px;top:168px;font-size:10px;line-height:10px;color:#000;-webkit-text-stroke:0.15px #000;transform:scaleX(0.9);">PTA3</div>
<div style="left:1256px;top:194px;width:26px;height:8px;background:#dcdcdc;"></div>
<div class="t" style="left:1284px;top:194px;font-size:10px;line-height:10px;color:#000;-webkit-text-stroke:0.15px #000;transform:scaleX(0.9);">PTD2</div>
<div style="left:1256px;top:220px;width:26px;height:8px;background:#dcdcdc;"></div>
<div class="t" style="left:1284px;top:220px;font-size:10px;line-height:10px;color:#000;-webkit-text-stroke:0.15px #000;transform:scaleX(0.9);">PTD3</div>
<div style="left:1256px;top:246px;width:26px;height:8px;background:#dcdcdc;"></div>
<div class="t" style="left:1284px;top:246px;font-size:10px;line-height:10px;color:#000;-webkit-text-stroke:0.15px #000;transform:scaleX(0.9);">PTB13</div>
<div style="left:1256px;top:272px;width:26px;height:8px;background:#c8c8c8;"></div>
<div class="t" style="left:1284px;top:272px;font-size:10px;line-height:10px;color:#000;-webkit-text-stroke:0.15px #000;transform:scaleX(0.9);">VDD_41</div>
<div style="left:1256px;top:298px;width:26px;height:8px;background:#c8c8c8;"></div>
<div class="t" style="left:1284px;top:298px;font-size:10px;line-height:10px;color:#000;-webkit-text-stroke:0.15px #000;transform:scaleX(0.9);">VSS_40</div>
<div style="left:1256px;top:324px;width:26px;height:8px;background:#dcdcdc;"></div>
<div class="t" style="left:1284px;top:324px;font-size:10px;line-height:10px;color:#000;-webkit-text-stroke:0.15px #000;transform:scaleX(0.9);">PTA7</div>
<div style="left:1256px;top:350px;width:26px;height:8px;background:#dcdcdc;"></div>
<div class="t" style="left:1284px;top:350px;font-size:10px;line-height:10px;color:#000;-webkit-text-stroke:0.15px #000;transform:scaleX(0.9);">PTC8</div>
<div style="left:1256px;top:376px;width:26px;height:8px;background:#dcdcdc;"></div>
<div class="t" style="left:1284px;top:376px;font-size:10px;line-height:10px;color:#000;-webkit-text-stroke:0.15px #000;transform:scaleX(0.9);">PTC9</div>
<div style="left:1256px;top:402px;width:26px;height:8px;background:#dcdcdc;"></div>
<div class="t" style="left:1284px;top:402px;font-size:10px;line-height:10px;color:#000;-webkit-text-stroke:0.15px #000;transform:scaleX(0.9);">PTB0</div>
<div style="left:1256px;top:428px;width:26px;height:8px;background:#dcdcdc;"></div>
<div class="t" style="left:1284px;top:428px;font-size:10px;line-height:10px;color:#000;-webkit-text-stroke:0.15px #000;transform:scaleX(0.9);">PTB1</div>
<svg style="left:916px;top:119px;" width="341" height="341" viewBox="0 0 341 341"><path d="M11 1 H330 L340 11 V330 L330 340 H11 L1 330 V11 Z" fill="#b9b9b9"/><path d="M339.5 11 V329.5 L329.5 339.5 H11 L1 329.5" fill="none" stroke="#727272" stroke-width="1"/><path d="M1.5 330 V11 L11 1.5 H330 L339.5 11" fill="none" stroke="#c2c2c2" stroke-width="1"/></svg>
<svg style="left:920px;top:123px;" width="17" height="17" viewBox="0 0 17 17"><circle cx="8.5" cy="8.5" r="7.5" fill="#00979a" stroke="#5a6e6e" stroke-width="0.8"/></svg>
<div style="left:965px;top:161px;width:120px;height:16px;border:1px solid #fff;"></div>
<div style="left:968px;top:164px;width:9px;height:9px;background:#dcdcdc;"></div>
<div class="t" style="left:981px;top:163px;font-size:10px;line-height:11px;color:#000;-webkit-text-stroke:0.15px #000;transform:scaleX(0.9);">ADC0</div>
<div style="left:965px;top:178px;width:120px;height:16px;border:1px solid #fff;"></div>
<div style="left:968px;top:181px;width:9px;height:9px;background:#dcdcdc;"></div>
<div class="t" style="left:981px;top:180px;font-size:10px;line-height:11px;color:#000;-webkit-text-stroke:0.15px #000;transform:scaleX(0.9);">CMP0</div>
<div style="left:965px;top:195px;width:120px;height:16px;border:1px solid #fff;"></div>
<div style="left:968px;top:198px;width:9px;height:9px;background:#dcdcdc;"></div>
<div class="t" style="left:981px;top:197px;font-size:10px;line-height:11px;color:#000;-webkit-text-stroke:0.15px #000;transform:scaleX(0.9);">FTM</div>
<div style="left:965px;top:212px;width:120px;height:16px;border:1px solid #fff;"></div>
<div style="left:968px;top:215px;width:9px;height:9px;background:#dcdcdc;"></div>
<div class="t" style="left:981px;top:214px;font-size:10px;line-height:11px;color:#000;-webkit-text-stroke:0.15px #000;transform:scaleX(0.9);">FTM1</div>
<div style="left:965px;top:229px;width:120px;height:16px;border:1px solid #fff;"></div>
<div style="left:968px;top:232px;width:9px;height:9px;background:#dcdcdc;"></div>
<div class="t" style="left:981px;top:231px;font-size:10px;line-height:11px;color:#000;-webkit-text-stroke:0.15px #000;transform:scaleX(0.9);">LPI2C0</div>
<div style="left:965px;top:246px;width:120px;height:16px;border:1px solid #fff;"></div>
<div style="left:968px;top:249px;width:9px;height:9px;background:#dcdcdc;"></div>
<div class="t" style="left:981px;top:248px;font-size:10px;line-height:11px;color:#000;-webkit-text-stroke:0.15px #000;transform:scaleX(0.9);">LPSPI1</div>
<div style="left:965px;top:263px;width:120px;height:16px;border:1px solid #fff;"></div>
<div style="left:968px;top:266px;width:9px;height:9px;background:#00ff00;"></div>
<div class="t" style="left:981px;top:265px;font-size:10px;line-height:11px;color:#000;-webkit-text-stroke:0.15px #000;transform:scaleX(0.9);">LPUART0</div>
<div style="left:965px;top:280px;width:120px;height:16px;border:1px solid #fff;"></div>
<div style="left:968px;top:283px;width:9px;height:9px;background:#dcdcdc;"></div>
<div class="t" style="left:981px;top:282px;font-size:10px;line-height:11px;color:#000;-webkit-text-stroke:0.15px #000;transform:scaleX(0.9);">OSC</div>
<div style="left:965px;top:297px;width:120px;height:16px;border:1px solid #fff;"></div>
<div style="left:968px;top:300px;width:9px;height:9px;background:#dcdcdc;"></div>
<div class="t" style="left:981px;top:299px;font-size:10px;line-height:11px;color:#000;-webkit-text-stroke:0.15px #000;transform:scaleX(0.9);">PORTB</div>
<div style="left:965px;top:314px;width:120px;height:16px;border:1px solid #fff;"></div>
<div style="left:968px;top:317px;width:9px;height:9px;background:#dcdcdc;"></div>
<div class="t" style="left:981px;top:316px;font-size:10px;line-height:11px;color:#000;-webkit-text-stroke:0.15px #000;transform:scaleX(0.9);">PORTD</div>
<div style="left:965px;top:331px;width:120px;height:16px;border:1px solid #fff;"></div>
<div style="left:968px;top:334px;width:9px;height:9px;background:#dcdcdc;"></div>
<div class="t" style="left:981px;top:333px;font-size:10px;line-height:11px;color:#000;-webkit-text-stroke:0.15px #000;transform:scaleX(0.9);">Platform</div>
<div style="left:965px;top:348px;width:120px;height:16px;border:1px solid #fff;"></div>
<div style="left:968px;top:351px;width:9px;height:9px;background:#dcdcdc;"></div>
<div class="t" style="left:981px;top:350px;font-size:10px;line-height:11px;color:#000;-webkit-text-stroke:0.15px #000;transform:scaleX(0.9);">RTC</div>
<div style="left:965px;top:365px;width:120px;height:16px;border:1px solid #fff;"></div>
<div style="left:968px;top:368px;width:9px;height:9px;background:#dcdcdc;"></div>
<div class="t" style="left:981px;top:367px;font-size:10px;line-height:11px;color:#000;-webkit-text-stroke:0.15px #000;transform:scaleX(0.9);">TRGMUX</div>
<div style="left:1086px;top:161px;width:120px;height:16px;border:1px solid #fff;"></div>
<div style="left:1089px;top:164px;width:9px;height:9px;background:#dcdcdc;"></div>
<div class="t" style="left:1102px;top:163px;font-size:10px;line-height:11px;color:#000;-webkit-text-stroke:0.15px #000;transform:scaleX(0.9);">CAN0</div>
<div style="left:1086px;top:178px;width:120px;height:16px;border:1px solid #fff;"></div>
<div style="left:1089px;top:181px;width:9px;height:9px;background:#dcdcdc;"></div>
<div class="t" style="left:1102px;top:180px;font-size:10px;line-height:11px;color:#000;-webkit-text-stroke:0.15px #000;transform:scaleX(0.9);">FLEXIO</div>
<div style="left:1086px;top:195px;width:120px;height:16px;border:1px solid #fff;"></div>
<div style="left:1089px;top:198px;width:9px;height:9px;background:#dcdcdc;"></div>
<div class="t" style="left:1102px;top:197px;font-size:10px;line-height:11px;color:#000;-webkit-text-stroke:0.15px #000;transform:scaleX(0.9);">FTM0</div>
<div style="left:1086px;top:212px;width:120px;height:16px;border:1px solid #fff;"></div>
<div style="left:1089px;top:215px;width:9px;height:9px;background:#dcdcdc;"></div>
<div class="t" style="left:1102px;top:214px;font-size:10px;line-height:11px;color:#000;-webkit-text-stroke:0.15px #000;transform:scaleX(0.9);">JTAG</div>
<div style="left:1086px;top:229px;width:120px;height:16px;border:1px solid #fff;"></div>
<div style="left:1089px;top:232px;width:9px;height:9px;background:#dcdcdc;"></div>
<div class="t" style="left:1102px;top:231px;font-size:10px;line-height:11px;color:#000;-webkit-text-stroke:0.15px #000;transform:scaleX(0.9);">LPSPI0</div>
<div style="left:1086px;top:246px;width:120px;height:16px;border:1px solid #fff;"></div>
<div style="left:1089px;top:249px;width:9px;height:9px;background:#dcdcdc;"></div>
<div class="t" style="left:1102px;top:248px;font-size:10px;line-height:11px;color:#000;-webkit-text-stroke:0.15px #000;transform:scaleX(0.9);">LPTMR0</div>
<div style="left:1086px;top:263px;width:120px;height:16px;border:1px solid #fff;"></div>
<div style="left:1089px;top:266px;width:9px;height:9px;background:#dcdcdc;"></div>
<div class="t" style="left:1102px;top:265px;font-size:10px;line-height:11px;color:#000;-webkit-text-stroke:0.15px #000;transform:scaleX(0.9);">LPUART1</div>
<div style="left:1086px;top:280px;width:120px;height:16px;border:1px solid #fff;"></div>
<div style="left:1089px;top:283px;width:9px;height:9px;background:#dcdcdc;"></div>
<div class="t" style="left:1102px;top:282px;font-size:10px;line-height:11px;color:#000;-webkit-text-stroke:0.15px #000;transform:scaleX(0.9);">PORTA</div>
<div style="left:1086px;top:297px;width:120px;height:16px;border:1px solid #fff;"></div>
<div style="left:1089px;top:300px;width:9px;height:9px;background:#dcdcdc;"></div>
<div class="t" style="left:1102px;top:299px;font-size:10px;line-height:11px;color:#000;-webkit-text-stroke:0.15px #000;transform:scaleX(0.9);">PORTC</div>
<div style="left:1086px;top:314px;width:120px;height:16px;border:1px solid #fff;"></div>
<div style="left:1089px;top:317px;width:9px;height:9px;background:#dcdcdc;"></div>
<div class="t" style="left:1102px;top:316px;font-size:10px;line-height:11px;color:#000;-webkit-text-stroke:0.15px #000;transform:scaleX(0.9);">PORTE</div>
<div style="left:1086px;top:331px;width:120px;height:16px;border:1px solid #fff;"></div>
<div style="left:1089px;top:334px;width:9px;height:9px;background:#c8c8c8;"></div>
<div class="t" style="left:1102px;top:333px;font-size:10px;line-height:11px;color:#000;-webkit-text-stroke:0.15px #000;transform:scaleX(0.9);">PowerAndGround</div>
<div style="left:1086px;top:348px;width:120px;height:16px;border:1px solid #fff;"></div>
<div style="left:1089px;top:351px;width:9px;height:9px;background:#dcdcdc;"></div>
<div class="t" style="left:1102px;top:350px;font-size:10px;line-height:11px;color:#000;-webkit-text-stroke:0.15px #000;transform:scaleX(0.9);">SWD</div>
<div class="t" style="left:947px;top:426px;font-size:16px;line-height:18px;color:#2a2a2a;">S32K118_LQFP48 - LQFP 48 package</div>
<div style="left:1px;top:596px;width:1443px;height:163px;background:#fff;border-radius:6px 0 0 0;"></div>
<div style="left:1px;top:596px;width:1443px;height:25px;background:#d1e1f1;border-top:1px solid #c3c9d6;border-bottom:1px solid #b4c4d8;border-radius:6px 0 0 0;"></div>
<div style="left:1px;top:596px;width:111px;height:26px;background:#fff;border-radius:6px 6px 0 0;"></div>
<svg style="left:6px;top:602px;" width="17" height="17" viewBox="0 0 17 17"><rect x="3" y="1" width="10" height="14.5" fill="none" stroke="#23906f" stroke-width="2"/><path d="M0 5H3M13 5H16M0 11H3M13 11H16M13 8H16" stroke="#23906f" stroke-width="1.6"/><path d="M4 5 C7 5 9 8 12 8 M3 11H13" fill="none" stroke="#23906f" stroke-width="1.5"/></svg>
<div class="t" style="left:26px;top:604px;font-size:12px;line-height:13px;color:#000;transform:scaleX(1.0054);">Routing Details</div>
<svg style="left:1398px;top:601px;" width="17" height="16" viewBox="0 0 17 16"><rect x="0.8" y="0.8" width="15" height="12" rx="2" fill="none" stroke="#23906f" stroke-width="1.5"/><path d="M3.5 5H12.5M5.5 8H10.5" stroke="#23906f" stroke-width="1.6"/><path d="M10 12.5 L12 15 L13 12.5Z" fill="#23906f"/></svg>
<div style="left:1424px;top:604px;width:11px;height:5px;border:1.3px solid #5a5a5a;background:#fff;"></div>
<div style="left:9px;top:628px;width:34px;height:25px;background:#f0f0f0;"></div>
<div style="left:10px;top:629px;width:32px;height:23px;background:#cce4f7;border:1px solid #2f5f9a;border-radius:4px;"></div>
<div style="left:12px;top:631px;width:29px;height:19px;border:1px dotted #000;"></div>
<div class="t" style="left:15px;top:635px;font-size:12px;line-height:13px;color:#000;transform:scaleX(0.9345);">Pins</div>
<div style="left:48px;top:628px;width:49px;height:25px;background:#f0f0f0;"></div>
<div style="left:49px;top:629px;width:47px;height:23px;background:#cce4f7;border:1px solid #2f5f9a;border-radius:4px;"></div>
<div class="t" style="left:54px;top:635px;font-size:12px;line-height:13px;color:#000;transform:scaleX(0.9533);">Signals</div>
<div style="left:103px;top:628px;width:1341px;height:25px;background:#fff;border-top:1px solid #e8e8e8;border-left:1px solid #e8e8e8;border-bottom:1px solid #7a7a7a;"></div>
<svg style="left:107px;top:634px;" width="12" height="13" viewBox="0 0 12 13"><circle cx="7.5" cy="4.5" r="3.3" fill="none" stroke="#777" stroke-width="1.6"/><path d="M5.5 6.5 L1 11" stroke="#777" stroke-width="1.8"/></svg>
<div class="t" style="left:121px;top:633px;font-size:12px;line-height:13px;color:#555;transform:scaleX(1.0429);">type filter text</div>
<div style="left:9px;top:656px;width:1435px;height:103px;border-top:1px solid #a0a0a0;border-left:1px solid #a0a0a0;"></div>
<div style="left:16px;top:663px;width:1428px;height:26px;background:#b9d1ea;"></div>
<div class="t" style="left:20px;top:670px;font-size:12px;line-height:13px;color:#000;transform:scaleX(0.9813);">Routing Details for BOARD_InitPins</div>
<div style="left:230px;top:665px;width:34px;height:22px;background:#fff;border-bottom:1px solid #666;"></div>
<div class="t" style="left:243px;top:671px;font-size:12px;line-height:13px;color:#000;transform:scaleX(1.0166);">2</div>
<div style="left:269px;top:665px;width:22px;height:22px;border:2px solid #f1eeee;background:#b9d1ea;box-shadow:inset 0 0 0 1px #c8c8d0;"></div>
<svg style="left:272px;top:668px;" width="16" height="16" viewBox="0 0 16 16"><circle cx="8" cy="8" r="8" fill="#22907a"/><path d="M8 4V12M4 8H12" stroke="#fff" stroke-width="2.2"/></svg>
<div style="left:296px;top:665px;width:22px;height:22px;border:2px solid #f1eeee;background:#b9d1ea;"></div>
<svg style="left:299px;top:668px;" width="16" height="16" viewBox="0 0 16 16"><circle cx="8" cy="8" r="8" fill="#a9b6c4"/><path d="M4.5 4.5L11.5 11.5M11.5 4.5L4.5 11.5" stroke="#d6e2ee" stroke-width="2"/></svg>
<div style="left:323px;top:665px;width:22px;height:22px;border:2px solid #f1eeee;background:#b9d1ea;"></div>
<svg style="left:326px;top:670px;" width="16" height="10" viewBox="0 0 16 10"><path d="M3 8 L8 3 L13 8" fill="none" stroke="#a5b5c5" stroke-width="2.4"/></svg>
<div style="left:350px;top:665px;width:22px;height:22px;border:2px solid #f1eeee;background:#b9d1ea;"></div>
<svg style="left:353px;top:671px;" width="16" height="10" viewBox="0 0 16 10"><path d="M3 2 L8 7 L13 2" fill="none" stroke="#a5b5c5" stroke-width="2.4"/></svg>
<div style="left:16px;top:689px;width:1px;height:70px;background:#b9d1ea;"></div>
<div style="left:416px;top:714px;width:80px;height:17px;background:#f0f0f0;"></div>
<div style="left:416px;top:732px;width:80px;height:18px;background:#f0f0f0;"></div>
<div style="left:497px;top:714px;width:66px;height:17px;background:#f0f0f0;"></div>
<div style="left:1190px;top:714px;width:249px;height:17px;background:#f0f0f0;"></div>
<div style="left:1190px;top:732px;width:249px;height:18px;background:#f0f0f0;"></div>
<div style="left:17px;top:751px;width:40px;height:8px;background:#f7f7f7;"></div>
<div style="left:56px;top:689px;width:1px;height:24px;background:#e5e5e5;"></div>
<div style="left:57px;top:713px;width:1px;height:46px;background:#f0f0f0;"></div>
<div style="left:137px;top:689px;width:1px;height:24px;background:#e5e5e5;"></div>
<div style="left:138px;top:713px;width:1px;height:46px;background:#f0f0f0;"></div>
<div style="left:168px;top:689px;width:1px;height:24px;background:#e5e5e5;"></div>
<div style="left:169px;top:713px;width:1px;height:46px;background:#f0f0f0;"></div>
<div style="left:213px;top:689px;width:1px;height:24px;background:#e5e5e5;"></div>
<div style="left:214px;top:713px;width:1px;height:46px;background:#f0f0f0;"></div>
<div style="left:321px;top:689px;width:1px;height:24px;background:#e5e5e5;"></div>
<div style="left:322px;top:713px;width:1px;height:46px;background:#f0f0f0;"></div>
<div style="left:367px;top:689px;width:1px;height:24px;background:#e5e5e5;"></div>
<div style="left:368px;top:713px;width:1px;height:46px;background:#f0f0f0;"></div>
<div style="left:414px;top:689px;width:1px;height:24px;background:#e5e5e5;"></div>
<div style="left:415px;top:713px;width:1px;height:46px;background:#f0f0f0;"></div>
<div style="left:495px;top:689px;width:1px;height:24px;background:#e5e5e5;"></div>
<div style="left:496px;top:713px;width:1px;height:46px;background:#f0f0f0;"></div>
<div style="left:562px;top:689px;width:1px;height:24px;background:#e5e5e5;"></div>
<div style="left:563px;top:713px;width:1px;height:46px;background:#f0f0f0;"></div>
<div style="left:656px;top:689px;width:1px;height:24px;background:#e5e5e5;"></div>
<div style="left:657px;top:713px;width:1px;height:46px;background:#f0f0f0;"></div>
<div style="left:864px;top:689px;width:1px;height:24px;background:#e5e5e5;"></div>
<div style="left:865px;top:713px;width:1px;height:46px;background:#f0f0f0;"></div>
<div style="left:948px;top:689px;width:1px;height:24px;background:#e5e5e5;"></div>
<div style="left:949px;top:713px;width:1px;height:46px;background:#f0f0f0;"></div>
<div style="left:1028px;top:689px;width:1px;height:24px;background:#e5e5e5;"></div>
<div style="left:1029px;top:713px;width:1px;height:46px;background:#f0f0f0;"></div>
<div style="left:1108px;top:689px;width:1px;height:24px;background:#e5e5e5;"></div>
<div style="left:1109px;top:713px;width:1px;height:46px;background:#f0f0f0;"></div>
<div style="left:1188px;top:689px;width:1px;height:24px;background:#e5e5e5;"></div>
<div style="left:1189px;top:713px;width:1px;height:46px;background:#f0f0f0;"></div>
<div style="left:1277px;top:689px;width:1px;height:24px;background:#e5e5e5;"></div>
<div style="left:1278px;top:713px;width:1px;height:46px;background:#f0f0f0;"></div>
<div style="left:1357px;top:689px;width:1px;height:24px;background:#e5e5e5;"></div>
<div style="left:1358px;top:713px;width:1px;height:46px;background:#f0f0f0;"></div>
<div style="left:1438px;top:689px;width:1px;height:24px;background:#e5e5e5;"></div>
<div style="left:1439px;top:713px;width:1px;height:46px;background:#f0f0f0;"></div>
<div style="left:17px;top:731px;width:1427px;height:1px;background:#f0f0f0;"></div>
<div style="left:17px;top:750px;width:1427px;height:1px;background:#f0f0f0;"></div>
<svg style="left:35px;top:689px;" width="9" height="6" viewBox="0 0 9 6"><path d="M0.5 0.5 L4.5 4.5 L8.5 0.5" fill="none" stroke="#888" stroke-width="1"/></svg>
<div class="t" style="left:23px;top:695px;font-size:12px;line-height:13px;color:#000;transform:scaleX(1.0324);">#</div>
<div class="t" style="left:63px;top:695px;font-size:12px;line-height:13px;color:#000;transform:scaleX(0.9818);">Peripheral</div>
<div class="t" style="left:144px;top:695px;font-size:12px;line-height:13px;color:#000;transform:scaleX(0.8840);">Si...</div>
<div class="t" style="left:175px;top:695px;font-size:12px;line-height:13px;color:#000;transform:scaleX(1.0312);">Arrow</div>
<div class="t" style="left:220px;top:695px;font-size:12px;line-height:13px;color:#000;transform:scaleX(1.0194);">Routed pin/signal</div>
<div class="t" style="left:328px;top:695px;font-size:12px;line-height:13px;color:#000;transform:scaleX(0.9541);">Label</div>
<div class="t" style="left:374px;top:695px;font-size:12px;line-height:13px;color:#000;transform:scaleX(0.9722);">Iden...</div>
<div class="t" style="left:421px;top:695px;font-size:12px;line-height:13px;color:#000;transform:scaleX(1.0123);">Power group</div>
<div class="t" style="left:502px;top:695px;font-size:12px;line-height:13px;color:#000;transform:scaleX(1.0290);">Direction</div>
<div class="t" style="left:569px;top:695px;font-size:12px;line-height:13px;color:#000;transform:scaleX(1.0147);">Interrupt Status</div>
<div class="t" style="left:663px;top:695px;font-size:12px;line-height:13px;color:#000;transform:scaleX(1.0416);">Interrupt Configuration</div>
<div class="t" style="left:871px;top:695px;font-size:12px;line-height:13px;color:#000;transform:scaleX(0.9666);">Lock Register</div>
<div class="t" style="left:955px;top:695px;font-size:12px;line-height:13px;color:#000;transform:scaleX(0.9603);">Pull Enable</div>
<div class="t" style="left:1035px;top:695px;font-size:12px;line-height:13px;color:#000;transform:scaleX(0.9599);">Pull Select</div>
<div class="t" style="left:1115px;top:695px;font-size:12px;line-height:13px;color:#000;transform:scaleX(1.0202);">Digital Filter</div>
<div class="t" style="left:1195px;top:695px;font-size:12px;line-height:13px;color:#000;">Drive Strength</div>
<div class="t" style="left:1284px;top:695px;font-size:12px;line-height:13px;color:#000;transform:scaleX(0.9439);">Passive Filter</div>
<div class="t" style="left:1364px;top:695px;font-size:12px;line-height:13px;color:#000;transform:scaleX(1.0221);">Initial Value</div>
<div class="t" style="left:23px;top:717px;font-size:12px;line-height:13px;color:#000;transform:scaleX(1.0166);">36</div>
<div class="t" style="left:63px;top:717px;font-size:12px;line-height:13px;color:#000;transform:scaleX(0.9080);">LPUART0</div>
<div class="t" style="left:144px;top:717px;font-size:12px;line-height:13px;color:#000;transform:scaleX(1.0137);">rxd</div>
<div class="t" style="left:175px;top:717px;font-size:12px;line-height:13px;color:#888;transform:scaleX(1.1629);">&lt;-</div>
<div class="t" style="left:220px;top:717px;font-size:12px;line-height:13px;color:#000;transform:scaleX(0.9861);">[36] PTA2</div>
<div class="t" style="left:328px;top:717px;font-size:12px;line-height:13px;color:#000;transform:scaleX(0.8138);">EZ_RX</div>
<div class="t" style="left:374px;top:717px;font-size:12px;line-height:13px;color:#000;transform:scaleX(0.8138);">EZ_RX</div>
<div class="t" style="left:502px;top:717px;font-size:12px;line-height:13px;color:#000;font-style:italic;transform:scaleX(1.0587);">Input</div>
<div class="t" style="left:569px;top:717px;font-size:12px;line-height:13px;color:#000;font-style:italic;transform:scaleX(1.0503);">Don&#x27;t modify</div>
<div class="t" style="left:663px;top:717px;font-size:12px;line-height:13px;color:#000;font-style:italic;transform:scaleX(0.9774);">Interrupt Status Flag (ISF) is disabled</div>
<div class="t" style="left:871px;top:717px;font-size:12px;line-height:13px;color:#000;font-style:italic;">Unlocked</div>
<div class="t" style="left:955px;top:717px;font-size:12px;line-height:13px;color:#000;transform:scaleX(0.9625);">Enabled</div>
<div class="t" style="left:1035px;top:717px;font-size:12px;line-height:13px;color:#000;">Pull Up</div>
<div class="t" style="left:1115px;top:717px;font-size:12px;line-height:13px;color:#000;font-style:italic;transform:scaleX(0.9887);">Disabled</div>
<div class="t" style="left:1195px;top:717px;font-size:12px;line-height:13px;color:#000;font-style:italic;transform:scaleX(1.0356);">n/a</div>
<div class="t" style="left:1284px;top:717px;font-size:12px;line-height:13px;color:#000;font-style:italic;transform:scaleX(1.0356);">n/a</div>
<div class="t" style="left:1364px;top:717px;font-size:12px;line-height:13px;color:#000;font-style:italic;transform:scaleX(1.0356);">n/a</div>
<div class="t" style="left:23px;top:736px;font-size:12px;line-height:13px;color:#000;transform:scaleX(1.0166);">35</div>
<div class="t" style="left:63px;top:736px;font-size:12px;line-height:13px;color:#000;transform:scaleX(0.9080);">LPUART0</div>
<div class="t" style="left:144px;top:736px;font-size:12px;line-height:13px;color:#000;transform:scaleX(1.0481);">txd</div>
<div class="t" style="left:175px;top:736px;font-size:12px;line-height:13px;color:#888;transform:scaleX(1.1629);">-&gt;</div>
<div class="t" style="left:220px;top:736px;font-size:12px;line-height:13px;color:#000;transform:scaleX(0.9861);">[35] PTA3</div>
<div class="t" style="left:328px;top:736px;font-size:12px;line-height:13px;color:#000;transform:scaleX(0.8165);">EZ_TX</div>
<div class="t" style="left:374px;top:736px;font-size:12px;line-height:13px;color:#000;transform:scaleX(0.8165);">EZ_TX</div>
<div class="t" style="left:502px;top:736px;font-size:12px;line-height:13px;color:#000;transform:scaleX(1.0662);">Output</div>
<div class="t" style="left:569px;top:736px;font-size:12px;line-height:13px;color:#000;font-style:italic;transform:scaleX(1.0503);">Don&#x27;t modify</div>
<div class="t" style="left:663px;top:736px;font-size:12px;line-height:13px;color:#000;font-style:italic;transform:scaleX(0.9774);">Interrupt Status Flag (ISF) is disabled</div>
<div class="t" style="left:871px;top:736px;font-size:12px;line-height:13px;color:#000;font-style:italic;">Unlocked</div>
<div class="t" style="left:955px;top:736px;font-size:12px;line-height:13px;color:#000;transform:scaleX(0.9625);">Enabled</div>
<div class="t" style="left:1035px;top:736px;font-size:12px;line-height:13px;color:#000;">Pull Up</div>
<div class="t" style="left:1115px;top:736px;font-size:12px;line-height:13px;color:#000;font-style:italic;transform:scaleX(0.9887);">Disabled</div>
<div class="t" style="left:1195px;top:736px;font-size:12px;line-height:13px;color:#000;font-style:italic;transform:scaleX(1.0356);">n/a</div>
<div class="t" style="left:1284px;top:736px;font-size:12px;line-height:13px;color:#000;font-style:italic;transform:scaleX(1.0356);">n/a</div>
<div class="t" style="left:1364px;top:736px;font-size:12px;line-height:13px;color:#000;font-style:italic;transform:scaleX(1.0356);">n/a</div>
<div style="left:949px;top:712px;width:154px;height:41px;border:3px solid #ed1c24;"></div>
</body></html>
